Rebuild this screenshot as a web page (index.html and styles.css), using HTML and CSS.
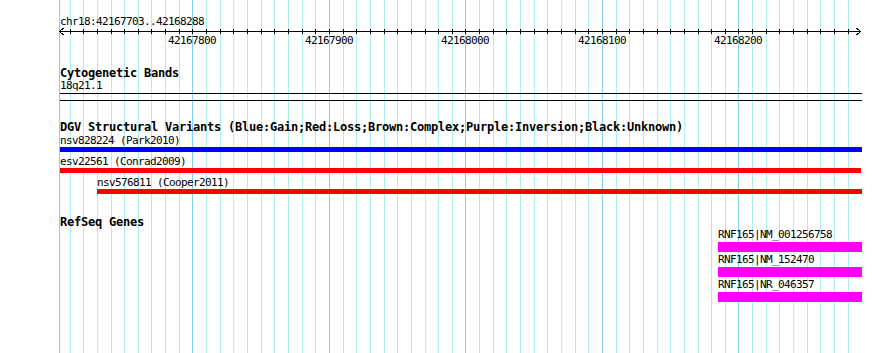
FILE: index.html
```html
<!DOCTYPE html>
<html lang="en">

<head>
    <meta charset="UTF-8">
    <title>chr18:42167703..42168288</title>
    <link rel="stylesheet" href="styles.css">
</head>

<body>
    <div class="panel">
        <!-- grid lines under every track -->
        <svg class="grid" id="grid" width="890" height="353"></svg>

        <div class="ruler">
            <div class="ruler-title">chr18:42167703..42168288</div>
            <svg class="ruler-line" id="ruler" width="890" height="7"></svg>
            <div class="ruler-labels" id="labels"></div>
        </div>

        <div class="track cytoband">
            <div class="track-title">Cytogenetic Bands</div>
            <div class="band-label">18q21.1</div>
            <div class="band"></div>
        </div>

        <div class="track dgv">
            <div class="track-title">DGV Structural Variants (Blue:Gain;Red:Loss;Brown:Complex;Purple:Inversion;Black:Unknown)</div>
            <div class="features">
                <div class="feature" style="margin-left: 0px; width: 802px">
                    <div class="feature-label">nsv828224 (Park2010)</div>
                    <div class="bar gain"></div>
                </div>
                <div class="feature" style="margin-left: 0px; width: 801px">
                    <div class="feature-label">esv22561 (Conrad2009)</div>
                    <div class="bar loss"></div>
                </div>
                <div class="feature" style="margin-left: 37px; width: 765px">
                    <div class="feature-label">nsv576811 (Cooper2011)</div>
                    <div class="bar loss"></div>
                </div>
            </div>
        </div>

        <div class="track refseq">
            <div class="track-title">RefSeq Genes</div>
            <div class="features">
                <div class="feature" style="margin-left: 658px; width: 144px">
                    <div class="feature-label">RNF165|NM_001256758</div>
                    <div class="bar gene"></div>
                </div>
                <div class="feature" style="margin-left: 658px; width: 144px">
                    <div class="feature-label">RNF165|NM_152470</div>
                    <div class="bar gene"></div>
                </div>
                <div class="feature" style="margin-left: 658px; width: 144px">
                    <div class="feature-label">RNF165|NR_046357</div>
                    <div class="bar gene"></div>
                </div>
            </div>
        </div>
    </div>

    <script>
        // view window and pixel scale
        var start = 42167703;
        var end = 42168288;
        var padLeft = 60;
        var scale = 800 / (end - start + 1);
        var ns = 'http://www.w3.org/2000/svg';

        function xOf(bp) {
            return Math.round(padLeft + (bp - start) * scale);
        }

        function line(svg, x1, y1, x2, y2, cls) {
            var l = document.createElementNS(ns, 'line');
            l.setAttribute('x1', x1);
            l.setAttribute('y1', y1);
            l.setAttribute('x2', x2);
            l.setAttribute('y2', y2);
            l.setAttribute('class', cls);
            svg.appendChild(l);
        }

        var grid = document.querySelector('#grid');
        var ruler = document.querySelector('#ruler');
        var labels = document.querySelector('#labels');

        // left edge of the panel
        line(grid, 59.5, 0, 59.5, 353, 'major');

        for (var bp = Math.ceil(start / 10) * 10; bp <= end; bp += 10) {
            var x = xOf(bp) + 0.5;
            var major = bp % 100 === 0;
            line(grid, x, 0, x, 353, major ? 'major' : 'minor');
            line(ruler, x, 1, x, 6, 'tick');
            if (major) {
                var span = document.createElement('span');
                span.className = 'ruler-label';
                span.textContent = bp;
                span.style.left = xOf(bp) + 'px';
                labels.appendChild(span);
            }
        }

        // ruler line with arrow heads
        line(ruler, 59, 3.5, 861, 3.5, 'tick');
        var arrows = [
            '63.5,0 59.5,3.5 63.5,7',
            '856.5,0 860.5,3.5 856.5,7'
        ];
        arrows.forEach(function(pts) {
            var p = document.createElementNS(ns, 'polyline');
            p.setAttribute('points', pts);
            p.setAttribute('class', 'arrow');
            ruler.appendChild(p);
        });
    </script>
</body>

</html>
```

FILE: styles.css
```css
body {
    margin: 0;
    background: #fff;
    color: #000;
    font-family: "DejaVu Sans Mono", "Liberation Mono", monospace;
    font-size: 11px;
    letter-spacing: -0.62px;
}

.panel {
    position: relative;
    width: 890px;
    height: 353px;
    overflow: hidden;
}

.grid {
    position: absolute;
    top: 0;
    left: 0;
}

.grid line,
.ruler-line line,
.ruler-line polyline {
    shape-rendering: crispEdges;
}

.minor {
    stroke: #afeeee;
    stroke-width: 1;
}

.major {
    stroke: #87cefa;
    stroke-width: 1;
}

.tick {
    stroke: #000;
    stroke-width: 1;
}

.arrow {
    fill: none;
    stroke: #000;
    stroke-width: 1;
}

.ruler,
.track {
    position: relative;
}

.ruler-title {
    margin-top: 16px;
    padding-left: 60px;
    height: 12px;
    line-height: 12px;
}

.ruler-line {
    display: block;
}

.ruler-labels {
    position: relative;
    height: 12px;
    line-height: 12px;
}

.ruler-label {
    position: absolute;
    top: 0;
    transform: translateX(-50%);
    white-space: nowrap;
}

.track {
    padding-left: 60px;
}

.track-title {
    height: 13px;
    line-height: 13px;
    font-size: 12px;
    font-weight: bold;
    letter-spacing: -0.225px;
    white-space: nowrap;
}

.cytoband {
    margin-top: 20px;
}

.band-label {
    height: 12px;
    line-height: 12px;
}

.band {
    margin-top: 1px;
    width: 802px;
    height: 6px;
    border-top: 1px solid #000;
    border-bottom: 1px solid #000;
}

.dgv {
    margin-top: 20px;
}

.dgv .features {
    display: flex;
    flex-direction: column;
    gap: 4px;
    margin-top: 1px;
}

.refseq {
    margin-top: 22px;
}

.refseq .features {
    display: flex;
    flex-direction: column;
    gap: 2px;
}

.feature-label {
    height: 12px;
    line-height: 12px;
    white-space: nowrap;
}

.bar {
    height: 5px;
}

.gain {
    background: #0000ff;
}

.loss {
    background: #ff0000;
}

.gene {
    margin-top: 1px;
    height: 10px;
    background: #ff00ff;
}
```
